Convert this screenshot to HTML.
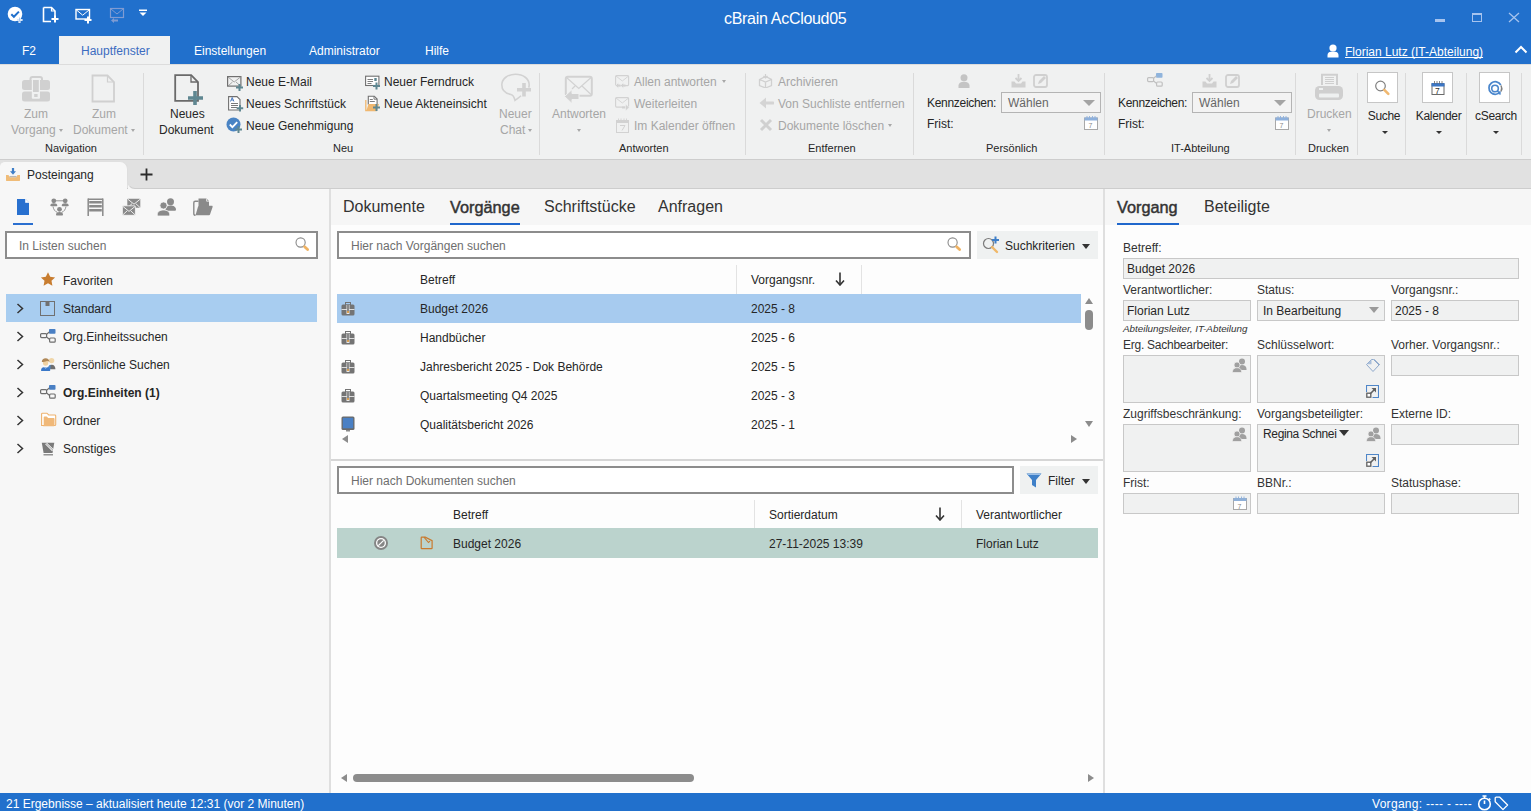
<!DOCTYPE html>
<html><head><meta charset="utf-8">
<style>
*{box-sizing:border-box;margin:0;padding:0}
html,body{width:1531px;height:811px;overflow:hidden;background:#f7f7f7;font-family:"Liberation Sans",sans-serif;font-size:12px;color:#262626}
.a{position:absolute;white-space:nowrap}
.t{line-height:14px}
#title{left:0;top:0;width:1531px;height:64px;background:#2170cc}
.w{color:#fff}
.g{color:#a6a6a6}
.sep{position:absolute;width:1px;background:#dadada}
.tri{position:absolute;width:0;height:0;border-left:2.5px solid transparent;border-right:2.5px solid transparent;border-top:3px solid #8a8a8a}
.search{position:absolute;border:2px solid #8c8c8c;background:#fff}
.ph{color:#6e6e6e}
.field{position:absolute;background:#f0f1f1;border:1px solid #c9c9c9}
</style></head><body>

<div id="title" class="a">
 <div class="a t w" style="left:724px;top:10px;font-size:16px;line-height:18px;letter-spacing:-0.3px">cBrain AcCloud05</div>
 <!-- quick access icons -->
 <svg class="a" style="left:7px;top:6px" width="18" height="18" viewBox="0 0 18 18"><circle cx="8" cy="8" r="7.3" fill="#fff"/><path d="M4.3 8.2l2.6 2.6 5-5.2" stroke="#2170cc" stroke-width="2" fill="none"/><path d="M12.5 11v6M9.5 14h6" stroke="#fff" stroke-width="2"/><path d="M12.5 11.5v5M10 14h5" stroke="#9ec0ee" stroke-width="0.8"/></svg>
 <svg class="a" style="left:42px;top:6px" width="18" height="18" viewBox="0 0 18 18"><path d="M1.5 1.5h8l3.5 3.5v6M9 15.5H1.5v-14" stroke="#fff" stroke-width="1.6" fill="none"/><path d="M9.5 1.5v3.5h3.5" stroke="#fff" stroke-width="1.2" fill="none"/><path d="M13 9.5v7M9.5 13h7" stroke="#fff" stroke-width="2"/></svg>
 <svg class="a" style="left:75px;top:8px" width="18" height="16" viewBox="0 0 18 16"><rect x="1" y="1.5" width="13.5" height="9.5" stroke="#fff" stroke-width="1.4" fill="none"/><path d="M1.5 2l6.2 5.2 6.3-5.2" stroke="#fff" stroke-width="1" fill="none"/><path d="M13 8.5v7M9.5 12h7" stroke="#fff" stroke-width="2"/></svg>
 <svg class="a" style="left:109px;top:7px" width="17" height="16" viewBox="0 0 17 16"><rect x="1.5" y="1.5" width="13" height="9" stroke="#7f9bd2" stroke-width="1.2" fill="none"/><path d="M2 2l6 5 6-5" stroke="#7f9bd2" stroke-width="1" fill="none"/><path d="M2 13.5l3-2.5v1.5h4v2h-4v1.5z" fill="#7f9bd2"/></svg>
 <svg class="a" style="left:138px;top:9px" width="10" height="8" viewBox="0 0 10 8"><rect x="1" y="0.5" width="8" height="1.5" fill="#fff"/><path d="M1.5 3.5h7l-3.5 3.5z" fill="#fff"/></svg>
 <!-- window controls -->
 <div class="a" style="left:1435px;top:19px;width:10px;height:3px;background:#a6c3ee"></div>
 <div class="a" style="left:1472px;top:13px;width:10px;height:9px;border:1px solid #a6c3ee;border-top-width:2px"></div>
 <svg class="a" style="left:1508px;top:12px" width="12" height="11" viewBox="0 0 12 11"><path d="M1 1l10 9M11 1L1 10" stroke="#a6c3ee" stroke-width="1.3"/></svg>
 <!-- tabs -->
 <div class="a" style="left:59px;top:36px;width:111px;height:28px;background:#f0f1f1"></div>
 <div class="a t w" style="left:22px;top:44px">F2</div>
 <div class="a t" style="left:81px;top:44px;color:#3c6cc0">Hauptfenster</div>
 <div class="a t w" style="left:194px;top:44px">Einstellungen</div>
 <div class="a t w" style="left:309px;top:44px">Administrator</div>
 <div class="a t w" style="left:425px;top:44px">Hilfe</div>
 <svg class="a" style="left:1327px;top:44px" width="12" height="14" viewBox="0 0 12 14"><circle cx="6" cy="4" r="3.6" fill="#fff"/><path d="M0.5 13.5v-2.5c0-2.5 2-3.5 5.5-3.5s5.5 1 5.5 3.5v2.5z" fill="#fff"/></svg>
 <div class="a t w" style="left:1345px;top:45px;text-decoration:underline;text-decoration-skip-ink:none">Florian Lutz (IT-Abteilung)</div>
 <svg class="a" style="left:1514px;top:45px" width="14" height="9" viewBox="0 0 14 9"><path d="M1.5 7.5l5.5-5.5 5.5 5.5" stroke="#fff" stroke-width="2" fill="none"/></svg>
</div>
<div class="a" style="left:0;top:64px;width:1531px;height:96px;background:#f0f1f1;border-top:1px solid #dcdcdc;border-bottom:1px solid #cdcdcd">
</div>
<svg class="a" style="left:22px;top:76px" width="29" height="27" viewBox="0 0 29 27"><path d="M8.5 4V3c0-1.2 0.8-2 2-2h7.5c1.2 0 2 0.8 2 2v1" fill="none" stroke="#d0d0d0" stroke-width="2"/><rect x="0" y="4" width="28" height="10" rx="2.5" fill="#d0d0d0"/><rect x="0" y="15.5" width="28" height="10" rx="2.5" fill="#d0d0d0"/><rect x="9.8" y="3" width="8.2" height="19.8" rx="1" fill="#f0f1f1"/><rect x="11" y="4" width="5.8" height="12" fill="#d0d0d0"/><rect x="12.2" y="18" width="3.4" height="3" fill="#d0d0d0"/></svg>
<div class="a t g" style="left:24px;top:107px;">Zum</div>
<div class="a t g" style="left:11px;top:123px;">Vorgang</div>
<div class="tri" style="left:59px;top:129px;border-top-color:#a8a8a8"></div>
<svg class="a" style="left:91px;top:74px" width="25" height="29" viewBox="0 0 25 29"><path d="M1.5 1.5h15l6.5 6.5v19.5h-21.5z" fill="none" stroke="#d0d0d0" stroke-width="1.8"/><path d="M16.5 1.5v6.5h6.5" fill="none" stroke="#d0d0d0" stroke-width="1.2"/></svg>
<div class="a t g" style="left:92px;top:107px;">Zum</div>
<div class="a t g" style="left:73px;top:123px;">Dokument</div>
<div class="tri" style="left:131px;top:129px;border-top-color:#a8a8a8"></div>
<div class="a t " style="left:45px;top:141px;font-size:11px">Navigation</div>
<div class="sep" style="left:143px;top:73px;height:82px"></div>
<svg class="a" style="left:174px;top:74px" width="30" height="32" viewBox="0 0 30 32"><path d="M1.2 1.2h16l6.8 6.8v18.8h-22.8z" fill="none" stroke="#6a6a6a" stroke-width="1.8"/><path d="M17 1.2v6.8h7" fill="none" stroke="#6a6a6a" stroke-width="1.3"/><path d="M21 17v14M14 24h15" stroke="#5f8791" stroke-width="3.6"/></svg>
<div class="a t " style="left:170px;top:107px;">Neues</div>
<div class="a t " style="left:159px;top:123px;">Dokument</div>
<svg class="a" style="left:227px;top:76px" width="17" height="15" viewBox="0 0 17 15"><rect x="0.6" y="0.6" width="13.3" height="9.5" fill="none" stroke="#707070" stroke-width="1.2"/><path d="M1 1l6.2 5 6.3-5M1 10l4.5-4M13.5 10l-4.5-4" fill="none" stroke="#909090" stroke-width="0.8"/><path d="M12.5 8v7M9 11.5h7" stroke="#5f8791" stroke-width="2"/></svg>
<svg class="a" style="left:228px;top:96px" width="16" height="16" viewBox="0 0 16 16"><path d="M0.6 0.6h8.4l3 3v10.4h-11.4z" fill="#fff" stroke="#707070" stroke-width="1.1"/><path d="M2.5 5.5l1.7-4 1.7 4M3.2 4h2" stroke="#4a7ac0" stroke-width="1" fill="none"/><path d="M3 7.5h7M3 9.5h7M3 11.5h6" stroke="#6a6a6a" stroke-width="0.9"/><path d="M12 9v6.5M8.7 12.3h6.5" stroke="#5f8791" stroke-width="2"/></svg>
<svg class="a" style="left:226px;top:117px" width="17" height="16" viewBox="0 0 17 16"><circle cx="7.5" cy="7.5" r="7" fill="#4a84c4"/><path d="M3.8 7.5l2.6 2.6 4.8-5" stroke="#fff" stroke-width="1.8" fill="none"/><path d="M12.5 9v7M9 12.5h7" stroke="#5f8791" stroke-width="2"/></svg>
<div class="a t " style="left:246px;top:75px;">Neue E-Mail</div>
<div class="a t " style="left:246px;top:97px;">Neues Schriftstück</div>
<div class="a t " style="left:246px;top:119px;">Neue Genehmigung</div>
<svg class="a" style="left:365px;top:75px" width="16" height="15" viewBox="0 0 16 15"><rect x="0.6" y="1.2" width="13.3" height="9.3" fill="#fff" stroke="#707070" stroke-width="1.1"/><path d="M2.5 4.5h5.5M2.5 6.5h5.5M2.5 8.5h4" stroke="#707070" stroke-width="0.9"/><rect x="9.3" y="3" width="2.4" height="3" fill="#5f8791"/><path d="M11.5 7.5v7M8 11h7" stroke="#5f8791" stroke-width="2"/></svg>
<svg class="a" style="left:365px;top:95px" width="16" height="17" viewBox="0 0 16 17"><path d="M0.8 5v10.5h11" fill="none" stroke="#f0b870" stroke-width="1.3"/><path d="M3.3 9.5V1.2h6l2.8 2.8v5.5" fill="#fff" stroke="#707070" stroke-width="1.1"/><path d="M9 1.2v3h3" fill="none" stroke="#707070" stroke-width="0.9"/><path d="M4.8 4.5h3M4.8 6.5h5" stroke="#707070" stroke-width="0.9"/><path d="M1.5 15.5l2-6.5h10.5l-2 6.5z" fill="#f0b870"/><path d="M11.5 9v7M8 12.5h7" stroke="#5f8791" stroke-width="2"/></svg>
<div class="a t " style="left:384px;top:75px;">Neuer Ferndruck</div>
<div class="a t " style="left:384px;top:97px;">Neue Akteneinsicht</div>
<svg class="a" style="left:500px;top:72px" width="33" height="30" viewBox="0 0 33 30"><path d="M11 22.5C5.5 21.5 1.8 18 1.8 12.8 1.8 6.8 7.8 2.2 15.5 2.2s13.7 4.6 13.7 10.6c0 1-0.2 2-0.5 2.8" fill="none" stroke="#d2d2d2" stroke-width="1.6"/><path d="M11 22.5c2 0.5 3.2 2.5 4 5.8 2-1.5 4.5-3 6-4.5" fill="none" stroke="#d2d2d2" stroke-width="1.6"/><path d="M24 11v13.5M17 17.8h14" stroke="#d2d2d2" stroke-width="3.6"/></svg>
<div class="a t g" style="left:499px;top:107px;">Neuer</div>
<div class="a t g" style="left:500px;top:123px;">Chat</div>
<div class="tri" style="left:528px;top:129px;border-top-color:#a8a8a8"></div>
<div class="a t " style="left:333px;top:141px;font-size:11px">Neu</div>
<div class="sep" style="left:539px;top:73px;height:82px"></div>
<svg class="a" style="left:564px;top:75px" width="30" height="28" viewBox="0 0 30 28"><rect x="1.8" y="1.8" width="26" height="19" rx="2" fill="none" stroke="#d2d2d2" stroke-width="2"/><path d="M2.5 2.5l12.3 11 12.3-11M18 11l9 8.5M11 11l-3 3" fill="none" stroke="#d2d2d2" stroke-width="1.2"/><path d="M0.5 21.5l7.5-7v4h7v6h-7v4z" fill="#d2d2d2" stroke="#f0f1f1" stroke-width="1"/></svg>
<div class="a t g" style="left:552px;top:107px;">Antworten</div>
<div class="tri" style="left:577px;top:129px;border-top-color:#a8a8a8"></div>
<svg class="a" style="left:615px;top:75px" width="15" height="14" viewBox="0 0 15 14"><rect x="0.6" y="0.6" width="13" height="10" rx="1" fill="none" stroke="#d2d2d2" stroke-width="1.1"/><path d="M1 1l6.3 5 6.3-5" fill="none" stroke="#d2d2d2" stroke-width="0.9"/><path d="M0.5 10.5l3-3v6zM5.5 10.5l3-3v6z" fill="#d2d2d2" stroke="#f0f1f1" stroke-width="0.6"/><path d="M3 10.5h2.5M8 10.5h2.5" stroke="#d2d2d2" stroke-width="1.8"/></svg>
<svg class="a" style="left:615px;top:97px" width="15" height="14" viewBox="0 0 15 14"><rect x="0.6" y="0.6" width="13" height="9.5" rx="1" fill="none" stroke="#d2d2d2" stroke-width="1.1"/><path d="M1 1l6.3 5 6.3-5" fill="none" stroke="#d2d2d2" stroke-width="0.9"/><path d="M7 10.5h4" stroke="#d2d2d2" stroke-width="2"/><path d="M10.5 7l3.8 3.5-3.8 3.5z" fill="#d2d2d2" stroke="#f0f1f1" stroke-width="0.6"/></svg>
<svg class="a" style="left:616px;top:118px" width="13" height="15" viewBox="0 0 13 15"><rect x="0.5" y="2.5" width="12" height="12" fill="none" stroke="#d2d2d2" stroke-width="1"/><rect x="0.5" y="2" width="12" height="3" fill="#d2d2d2"/><path d="M2.5 0.5v3M5 0.5v3M8 0.5v3M10.5 0.5v3" stroke="#d2d2d2" stroke-width="0.9"/><path d="M4 7.5h5l-3 5" fill="none" stroke="#d2d2d2" stroke-width="1"/></svg>
<div class="a t g" style="left:634px;top:75px;">Allen antworten</div>
<div class="tri" style="left:722px;top:80px;border-top-color:#a8a8a8"></div>
<div class="a t g" style="left:634px;top:97px;">Weiterleiten</div>
<div class="a t g" style="left:634px;top:119px;">Im Kalender öffnen</div>
<div class="a t " style="left:619px;top:141px;font-size:11px">Antworten</div>
<div class="sep" style="left:745px;top:73px;height:82px"></div>
<svg class="a" style="left:758px;top:74px" width="15" height="14" viewBox="0 0 15 14"><path d="M1.5 5.5l6-3 6 3v6l-6 2.5-6-2.5z M1.5 5.5l6 2.5 6-2.5M7.5 8v6" fill="none" stroke="#d0d0d0" stroke-width="1.3"/><path d="M7.5 0v4M5.5 2l2 2 2-2" stroke="#d0d0d0" stroke-width="1.2" fill="none"/></svg>
<svg class="a" style="left:759px;top:97px" width="15" height="12" viewBox="0 0 15 12"><path d="M0.5 6l6.5-5.5v11z" fill="#d4d4d4"/><path d="M6 6h8" stroke="#d4d4d4" stroke-width="3" stroke-linecap="round"/></svg>
<svg class="a" style="left:759px;top:118px" width="14" height="14" viewBox="0 0 14 14"><path d="M2 2l10 10M12 2l-10 10" stroke="#d0d0d0" stroke-width="3"/></svg>
<div class="a t g" style="left:778px;top:75px;">Archivieren</div>
<div class="a t g" style="left:778px;top:97px;">Von Suchliste entfernen</div>
<div class="a t g" style="left:778px;top:119px;">Dokumente löschen</div>
<div class="tri" style="left:888px;top:124px;border-top-color:#a8a8a8"></div>
<div class="a t " style="left:808px;top:141px;font-size:11px">Entfernen</div>
<div class="sep" style="left:913px;top:73px;height:82px"></div>
<svg class="a" style="left:958px;top:74px" width="12" height="14" viewBox="0 0 12 14"><circle cx="6" cy="3.8" r="3.5" fill="#c4c4c4"/><path d="M0.5 14v-2.5c0-2.5 2-3.8 5.5-3.8s5.5 1.3 5.5 3.8v2.5z" fill="#c4c4c4"/></svg>
<svg class="a" style="left:1011px;top:74px" width="15" height="14" viewBox="0 0 15 14"><path d="M7.5 0v6.5M4.5 4l3 3 3-3" stroke="#d0d0d0" stroke-width="1.8" fill="none"/><path d="M0.5 7.5h3l1.5 2h5l1.5-2h3v6h-14z" fill="#d0d0d0"/></svg>
<svg class="a" style="left:1033px;top:74px" width="15" height="14" viewBox="0 0 15 14"><rect x="1" y="1" width="13" height="12" rx="2" fill="none" stroke="#d0d0d0" stroke-width="1.8"/><path d="M5 10l1-3 5-5 2 2-5 5z" fill="#d0d0d0"/></svg>
<div class="a t " style="left:927px;top:96px;letter-spacing:-0.3px">Kennzeichen:</div>
<div class="a" style="left:1001px;top:92px;width:100px;height:21px;border:1px solid #b4b4b4;background:#f3f3f3"></div>
<div class="a t " style="left:1008px;top:96px;color:#666">Wählen</div>
<div class="tri" style="left:1083px;top:100px;border-left-width:6px;border-right-width:6px;border-top:6px solid #a4a4a4"></div>
<div class="a t " style="left:927px;top:117px;">Frist:</div>
<svg class="a" style="left:1084px;top:115px" width="14" height="15" viewBox="0 0 14 15"><rect x="0.5" y="3" width="13" height="11.5" fill="#fff" stroke="#a8a8a8" stroke-width="1"/><rect x="0.5" y="2.5" width="13" height="3" fill="#8db0dc"/><path d="M3 1v3M5.5 1v3M8.5 1v3M11 1v3" stroke="#8db0dc" stroke-width="0.9"/><text x="4.5" y="13" font-size="7" fill="#8a8a8a" font-family="Liberation Sans">7</text></svg>
<div class="a t " style="left:986px;top:141px;font-size:11px">Persönlich</div>
<div class="sep" style="left:1104px;top:73px;height:82px"></div>
<svg class="a" style="left:1147px;top:73px" width="16" height="14" viewBox="0 0 16 14"><rect x="0.6" y="4.6" width="6" height="4" rx="1" fill="none" stroke="#c0c0c0" stroke-width="1.2"/><rect x="9" y="0" width="6.5" height="4.8" rx="0.8" fill="#90b4dc"/><rect x="9.6" y="9" width="5.6" height="4.2" rx="1" fill="none" stroke="#c0c0c0" stroke-width="1.2"/><path d="M6.6 5.2L9.3 3M6.6 8l3 2.5" stroke="#c0c0c0" stroke-width="1.1"/></svg>
<svg class="a" style="left:1202px;top:74px" width="15" height="14" viewBox="0 0 15 14"><path d="M7.5 0v6.5M4.5 4l3 3 3-3" stroke="#d0d0d0" stroke-width="1.8" fill="none"/><path d="M0.5 7.5h3l1.5 2h5l1.5-2h3v6h-14z" fill="#d0d0d0"/></svg>
<svg class="a" style="left:1225px;top:74px" width="15" height="14" viewBox="0 0 15 14"><rect x="1" y="1" width="13" height="12" rx="2" fill="none" stroke="#d0d0d0" stroke-width="1.8"/><path d="M5 10l1-3 5-5 2 2-5 5z" fill="#d0d0d0"/></svg>
<div class="a t " style="left:1118px;top:96px;letter-spacing:-0.3px">Kennzeichen:</div>
<div class="a" style="left:1192px;top:92px;width:100px;height:21px;border:1px solid #b4b4b4;background:#f3f3f3"></div>
<div class="a t " style="left:1199px;top:96px;color:#666">Wählen</div>
<div class="tri" style="left:1274px;top:100px;border-left-width:6px;border-right-width:6px;border-top:6px solid #a4a4a4"></div>
<div class="a t " style="left:1118px;top:117px;">Frist:</div>
<svg class="a" style="left:1275px;top:115px" width="14" height="15" viewBox="0 0 14 15"><rect x="0.5" y="3" width="13" height="11.5" fill="#fff" stroke="#a8a8a8" stroke-width="1"/><rect x="0.5" y="2.5" width="13" height="3" fill="#8db0dc"/><path d="M3 1v3M5.5 1v3M8.5 1v3M11 1v3" stroke="#8db0dc" stroke-width="0.9"/><text x="4.5" y="13" font-size="7" fill="#8a8a8a" font-family="Liberation Sans">7</text></svg>
<div class="a t " style="left:1171px;top:141px;font-size:11px">IT-Abteilung</div>
<div class="sep" style="left:1295px;top:73px;height:82px"></div>
<svg class="a" style="left:1314px;top:73px" width="30" height="28" viewBox="0 0 30 28"><path d="M8 12V1.8h15V12" fill="none" stroke="#cfcfcf" stroke-width="2"/><path d="M11 4.5h9M11 6.5h9M11 8.5h9M11 10.5h9" stroke="#cfcfcf" stroke-width="1"/><rect x="1" y="13" width="28" height="14" rx="4.5" fill="#cfcfcf"/><rect x="5" y="15" width="4" height="2" fill="#eef0f0"/><rect x="5" y="20.5" width="20" height="4" rx="1" fill="#eef0f0"/></svg>
<div class="a t g" style="left:1307px;top:107px;">Drucken</div>
<div class="tri" style="left:1327px;top:129px;border-top-color:#a8a8a8"></div>
<div class="a t " style="left:1308px;top:141px;font-size:11px">Drucken</div>
<div class="sep" style="left:1357px;top:73px;height:82px"></div>
<div class="a" style="left:1367px;top:72px;width:31px;height:31px;background:#fff;border:1px solid #c6c6c6"></div>
<div class="a t " style="left:1367.7px;top:109px;letter-spacing:-0.3px">Suche</div>
<div class="a" style="left:1422px;top:72px;width:31px;height:31px;background:#fff;border:1px solid #c6c6c6"></div>
<div class="a t " style="left:1415.7px;top:109px;letter-spacing:-0.3px">Kalender</div>
<div class="a" style="left:1479px;top:72px;width:31px;height:31px;background:#fff;border:1px solid #c6c6c6"></div>
<div class="a t " style="left:1475px;top:109px;letter-spacing:-0.3px">cSearch</div>
<svg class="a" style="left:1373px;top:78px" width="19" height="19" viewBox="0 0 19 19"><circle cx="7.5" cy="8" r="4.8" fill="none" stroke="#808080" stroke-width="1.2"/><path d="M11.3 11.8l4 4" stroke="#f0b870" stroke-width="2.6" stroke-linecap="round"/></svg>
<svg class="a" style="left:1431px;top:80px" width="14" height="16" viewBox="0 0 14 16"><rect x="1" y="4" width="12" height="10.5" fill="#fff" stroke="#6a6a6a" stroke-width="1"/><rect x="0.5" y="3" width="13" height="3.5" fill="#3c76c4"/><path d="M3.5 1v3M6 1v3M8.5 1v3M11 1v3" stroke="#6a6a6a" stroke-width="0.8"/><text x="4" y="13.5" font-size="8.5" fill="#333" font-family="Liberation Sans">7</text></svg>
<svg class="a" style="left:1487px;top:80px" width="17" height="17" viewBox="0 0 17 17"><path d="M13.5 11.5A6.3 6.3 0 1 1 13.8 5" fill="none" stroke="#4a86cc" stroke-width="1.7"/><circle cx="8" cy="8.5" r="3.3" fill="none" stroke="#4a86cc" stroke-width="1.6"/><path d="M14 5.5a6.3 6.3 0 0 1 0 6" fill="none" stroke="#808080" stroke-width="1.5"/><path d="M10.5 11l3 3.5" stroke="#4a86cc" stroke-width="1.6"/></svg>
<div class="tri" style="left:1382px;top:131px;border-left-width:3px;border-right-width:3px;border-top:3.5px solid #333"></div><div class="tri" style="left:1436px;top:131px;border-left-width:3px;border-right-width:3px;border-top:3.5px solid #333"></div><div class="tri" style="left:1493px;top:131px;border-left-width:3px;border-right-width:3px;border-top:3.5px solid #333"></div>
<div class="sep" style="left:1405px;top:73px;height:82px"></div>
<div class="sep" style="left:1466px;top:73px;height:82px"></div>
<div class="sep" style="left:1521px;top:73px;height:82px"></div><div class="a" style="left:0;top:160px;width:1531px;height:29px;background:#e1e1e1;border-bottom:1px solid #cdcdcd"></div>
<div class="a" style="left:0;top:161px;width:128px;height:17px;background:#f7f7f7;border-radius:5px 8px 0 0;border-right:1px solid #dedede;border-top:1px solid #e0e0e0"></div><div class="a" style="left:0;top:177px;width:127px;height:13px;background:#f7f7f7"></div>
<div class="a" style="left:128px;top:178px;width:10px;height:12px;background:#f7f7f7"></div><div class="a" style="left:127px;top:171px;width:14px;height:18px;background:#e1e1e1;border-left:1px solid #dedede;border-bottom:1px solid #cdcdcd;border-bottom-left-radius:8px"></div>
<svg class="a" style="left:5px;top:167px" width="16" height="16" viewBox="0 0 16 16"><path d="M1 8h2.5l1.3 2.2h6.4l1.3-2.2h2.5v5.5c0 0.3-0.2 0.5-0.5 0.5h-13c-0.3 0-0.5-0.2-0.5-0.5z" fill="#f0bc78"/><path d="M4.5 9.6h7" stroke="#b8b8b8" stroke-width="1.3"/><path d="M8 1v4.5" stroke="#3f7fc8" stroke-width="2.2"/><path d="M5 4.3l3 3.5 3-3.5z" fill="#3f7fc8"/></svg>
<div class="a t " style="left:27px;top:168px;">Posteingang</div>
<svg class="a" style="left:140px;top:168px" width="13" height="13" viewBox="0 0 13 13"><path d="M6.5 0.5v12M0.5 6.5h12" stroke="#2b2b2b" stroke-width="1.8"/></svg>
<div class="a" style="left:0;top:189px;width:329px;height:604px;background:#f7f7f7"></div>
<div class="a" style="left:329px;top:189px;width:2px;height:604px;background:#dfdfdf"></div>
<svg class="a" style="left:16px;top:198px" width="14" height="18" viewBox="0 0 14 18"><path d="M1 1h8.5l3.5 3.5v12.5h-12z" fill="#2870cf"/><path d="M9.5 1v3.5h3.5" fill="#fff" stroke="#fff" stroke-width="0.6"/></svg>
<div class="a" style="left:13px;top:223px;width:20px;height:2px;background:#2a6fd0"></div>
<svg class="a" style="left:50px;top:198px" width="19" height="18" viewBox="0 0 19 18"><path d="M5 2.8h9M3 8.5c0.5 3 2 5 4.5 6M16 8.5c-0.5 3-2 5-4.5 6" stroke="#8a8a8a" stroke-width="0.9" fill="none"/><circle cx="3.8" cy="2.8" r="2.4" fill="#8a8a8a"/><circle cx="15.2" cy="2.8" r="2.4" fill="#8a8a8a"/><path d="M0.3 7.5c0-1.5 1.5-2.3 3.5-2.3s3.5 0.8 3.5 2.3c0 0.6-0.5 0.8-1 0.8h-5c-0.6 0-1-0.3-1-0.8zM11.7 7.5c0-1.5 1.5-2.3 3.5-2.3s3.5 0.8 3.5 2.3c0 0.6-0.5 0.8-1 0.8h-5c-0.6 0-1-0.3-1-0.8z" fill="#8a8a8a"/><circle cx="9.5" cy="11.3" r="2.4" fill="#8a8a8a"/><path d="M6 16.5c0-1.5 1.5-2.5 3.5-2.5s3.5 1 3.5 2.5c0 0.6-0.5 1-1 1h-5c-0.6 0-1-0.4-1-1z" fill="#8a8a8a"/></svg>
<svg class="a" style="left:87px;top:198px" width="17" height="18" viewBox="0 0 17 18"><path d="M1.2 0.5v17.5M15.8 0.5v17.5" stroke="#8a8a8a" stroke-width="1.5"/><rect x="1" y="0.5" width="15" height="1.5" fill="#8a8a8a"/><rect x="2.2" y="3" width="12.6" height="2.5" fill="#8a8a8a"/><rect x="2.2" y="7" width="12.6" height="2.5" fill="#8a8a8a"/><rect x="2.2" y="11" width="12.6" height="2.5" fill="#8a8a8a"/></svg>
<svg class="a" style="left:122px;top:198px" width="19" height="18" viewBox="0 0 19 18"><rect x="5.3" y="0.8" width="13" height="9" rx="0.8" fill="#8a8a8a"/><path d="M5.8 1.2l6.2 5 6.2-5M5.8 9.5l4.2-3.8M18 9.5l-4.2-3.8" stroke="#f7f7f7" stroke-width="0.9" fill="none"/><rect x="0.4" y="7.8" width="13" height="9.5" rx="0.8" fill="#8a8a8a" stroke="#f7f7f7" stroke-width="0.8"/><path d="M0.9 8.4l6.1 5 6.1-5M0.9 16.8l4.3-4M13 16.8l-4.3-4" stroke="#f7f7f7" stroke-width="0.9" fill="none"/></svg>
<svg class="a" style="left:157px;top:198px" width="20" height="19" viewBox="0 0 20 19"><circle cx="13.5" cy="3.8" r="3.5" fill="#8a8a8a"/><path d="M8.5 11.5c0-2.5 2-4 5-4s5.5 1.5 5.5 4c0 0.8-0.5 1.3-1.3 1.3h-7.9c-0.8 0-1.3-0.5-1.3-1.3z" fill="#8a8a8a"/><circle cx="6.5" cy="7.5" r="3.6" fill="#8a8a8a" stroke="#f7f7f7" stroke-width="0.8"/><path d="M0.3 16.5c0-2.8 2.5-4.5 6.2-4.5s6.2 1.7 6.2 4.5c0 1-0.6 1.5-1.5 1.5h-9.4c-0.9 0-1.5-0.5-1.5-1.5z" fill="#8a8a8a" stroke="#f7f7f7" stroke-width="0.8"/></svg>
<svg class="a" style="left:193px;top:198px" width="20" height="18" viewBox="0 0 20 18"><path d="M2.5 17.3c-1 0-1.7-0.6-1.7-1.5v-11c0-0.9 0.6-1.5 1.5-1.5h3.2" fill="none" stroke="#8a8a8a" stroke-width="1.4"/><path d="M5.5 8V0.6h8l2.5 2.5v5" fill="#8a8a8a"/><path d="M13.6 0.6v2.6h2.5" fill="none" stroke="#f7f7f7" stroke-width="0.8"/><path d="M2.5 17.3l2.5-8.5c0.2-0.6 0.7-1 1.3-1h12.5c0.6 0 1 0.5 0.8 1.1l-2.5 7.4c-0.2 0.6-0.8 1-1.4 1z" fill="#8a8a8a"/></svg>
<div class="a" style="left:5px;top:231px;width:313px;height:28px;border:2px solid #8c8c8c;background:#fff"></div>
<div class="a t " style="left:19px;top:239px;color:#6e6e6e">In Listen suchen</div>
<svg class="a" style="left:294px;top:237px" width="16" height="16" viewBox="0 0 16 16"><circle cx="6.6" cy="5.5" r="4.6" fill="none" stroke="#8a8a8a" stroke-width="1.1"/><path d="M10.6 9.8l3 2.8" stroke="#efb262" stroke-width="2.8" stroke-linecap="round"/></svg>
<div class="a" style="left:6px;top:294px;width:311px;height:28px;background:#a8cdf0"></div>
<svg class="a" style="left:40px;top:272px" width="16" height="14" viewBox="0 0 16 14"><path d="M8 0.3l2.2 4.5 4.9 0.6-3.6 3.4 0.9 4.9-4.4-2.4-4.4 2.4 0.9-4.9-3.6-3.4 4.9-0.6z" fill="#c87d30"/></svg>
<div class="a t " style="left:63px;top:274px;">Favoriten</div>
<svg class="a" style="left:16px;top:303px" width="8" height="11" viewBox="0 0 8 11"><path d="M1.5 1l5 4.5-5 4.5" stroke="#333" stroke-width="1.5" fill="none"/></svg>
<div class="a t " style="left:63px;top:302px;">Standard</div>
<svg class="a" style="left:16px;top:331px" width="8" height="11" viewBox="0 0 8 11"><path d="M1.5 1l5 4.5-5 4.5" stroke="#333" stroke-width="1.5" fill="none"/></svg>
<div class="a t " style="left:63px;top:330px;">Org.Einheitssuchen</div>
<svg class="a" style="left:16px;top:359px" width="8" height="11" viewBox="0 0 8 11"><path d="M1.5 1l5 4.5-5 4.5" stroke="#333" stroke-width="1.5" fill="none"/></svg>
<div class="a t " style="left:63px;top:358px;">Persönliche Suchen</div>
<svg class="a" style="left:16px;top:387px" width="8" height="11" viewBox="0 0 8 11"><path d="M1.5 1l5 4.5-5 4.5" stroke="#333" stroke-width="1.5" fill="none"/></svg>
<div class="a t " style="left:63px;top:386px;font-weight:bold">Org.Einheiten (1)</div>
<svg class="a" style="left:16px;top:415px" width="8" height="11" viewBox="0 0 8 11"><path d="M1.5 1l5 4.5-5 4.5" stroke="#333" stroke-width="1.5" fill="none"/></svg>
<div class="a t " style="left:63px;top:414px;">Ordner</div>
<svg class="a" style="left:16px;top:443px" width="8" height="11" viewBox="0 0 8 11"><path d="M1.5 1l5 4.5-5 4.5" stroke="#333" stroke-width="1.5" fill="none"/></svg>
<div class="a t " style="left:63px;top:442px;">Sonstiges</div>
<svg class="a" style="left:40px;top:301px" width="15" height="15" viewBox="0 0 15 15"><rect x="0.5" y="0.5" width="14" height="14" fill="none" stroke="#707070" stroke-width="1"/><rect x="5.5" y="0.5" width="4" height="4.5" fill="#707070"/></svg>
<svg class="a" style="left:40px;top:329px" width="16" height="14" viewBox="0 0 16 14"><rect x="0.6" y="4.6" width="6" height="4" rx="1" fill="none" stroke="#6e6e6e" stroke-width="1.2"/><rect x="9" y="0" width="6.5" height="4.8" rx="0.8" fill="#4a80c4"/><rect x="9.6" y="9" width="5.6" height="4.2" rx="1" fill="none" stroke="#6e6e6e" stroke-width="1.2"/><path d="M6.6 5.2L9.3 3M6.6 8l3 2.5" stroke="#6e6e6e" stroke-width="1.1"/></svg>
<svg class="a" style="left:40px;top:385px" width="16" height="14" viewBox="0 0 16 14"><rect x="0.6" y="4.6" width="6" height="4" rx="1" fill="none" stroke="#6e6e6e" stroke-width="1.2"/><rect x="9" y="0" width="6.5" height="4.8" rx="0.8" fill="#4a80c4"/><rect x="9.6" y="9" width="5.6" height="4.2" rx="1" fill="none" stroke="#6e6e6e" stroke-width="1.2"/><path d="M6.6 5.2L9.3 3M6.6 8l3 2.5" stroke="#6e6e6e" stroke-width="1.1"/></svg>
<svg class="a" style="left:40px;top:356px" width="17" height="16" viewBox="0 0 17 16"><circle cx="11.6" cy="4.6" r="2.7" fill="#f0d6a8"/><path d="M8 13.2c0-2.5 1.5-4.5 3.8-4.5s3.6 2 3.6 4.5z" fill="#6e6e6e"/><path d="M8 13.2c0-2.5 1-4.3 2.5-4.5v4.5z" fill="#4a8ad0"/><ellipse cx="5.6" cy="6.8" rx="2.7" ry="3" fill="#f0d2a2"/><path d="M1.8 6c0-2.5 1.6-3.8 3.8-3.8s3.8 1.3 3.8 3.8c-1-1-2-1.2-3-0.8-1 0.4-2.5 0.6-4.6 0.8z" fill="#b08858"/><path d="M1 14.5c0-2.5 1.5-3.6 4.6-3.6s4.6 1.1 4.6 3.6c0 0.3-0.2 0.5-0.5 0.5h-8.2c-0.3 0-0.5-0.2-0.5-0.5z" fill="#3a78c8"/><path d="M4.6 11l1 1.3 1-1.3" fill="none" stroke="#fff" stroke-width="0.7"/></svg>
<svg class="a" style="left:40px;top:412px" width="17" height="16" viewBox="0 0 17 16"><path d="M1.6 13.5v-11.5c0-0.5 0.3-0.8 0.8-0.8h4.5l1.8 1.8h6.2c0.5 0 0.8 0.3 0.8 0.8v8.7c0 0.6-0.4 1-1 1z" fill="#fff" stroke="#eeb26e" stroke-width="1.1"/><path d="M3 14.3h10.5c0.6 0 1-0.4 1-1v-6.5c0-0.5-0.3-0.8-0.8-0.8h-5.5l-1.5-1.5h-2.2c-0.5 0-0.8 0.3-0.8 0.8v8.2c0 0.5-0.3 0.8-0.8 0.8z" fill="#f0b878"/></svg>
<svg class="a" style="left:41px;top:442px" width="15" height="15" viewBox="0 0 15 15"><path d="M0.8 0.8h12.5l-1.8 10.2h-8.9z" fill="#7a7a7a"/><path d="M5 1.5l7 6.8" stroke="#fff" stroke-width="2.4"/><path d="M5 1.5l7 6.8" stroke="#7a7a7a" stroke-width="0.8"/><path d="M2.5 12.8h9.5" stroke="#7a7a7a" stroke-width="1.2"/></svg><div class="a" style="left:331px;top:189px;width:772px;height:604px;background:#fdfdfd"></div>
<div class="a" style="left:331px;top:189px;width:772px;height:36px;background:#f6f6f6"></div>
<div class="a" style="left:1103px;top:189px;width:2px;height:604px;background:#dfdfdf"></div>
<div class="a" style="left:343px;top:198px;font-size:16px;line-height:18px;color:#333">Dokumente</div>
<div class="a" style="left:450px;top:198px;font-size:16px;line-height:18px;color:#333;font-size:16.3px;-webkit-text-stroke:0.45px #333;letter-spacing:0px">Vorgänge</div>
<div class="a" style="left:544px;top:198px;font-size:16px;line-height:18px;color:#333">Schriftstücke</div>
<div class="a" style="left:658px;top:198px;font-size:16px;line-height:18px;color:#333">Anfragen</div>
<div class="a" style="left:450px;top:223px;width:70px;height:2px;background:#2067cc"></div>
<div class="a" style="left:337px;top:231px;width:634px;height:28px;border:2px solid #8c8c8c;background:#fff"></div>
<div class="a t " style="left:351px;top:239px;color:#6e6e6e">Hier nach Vorgängen suchen</div>
<svg class="a" style="left:946px;top:237px" width="16" height="16" viewBox="0 0 16 16"><circle cx="6.6" cy="5.5" r="4.6" fill="none" stroke="#8a8a8a" stroke-width="1.1"/><path d="M10.6 9.8l3 2.8" stroke="#efb262" stroke-width="2.8" stroke-linecap="round"/></svg>
<div class="a" style="left:977px;top:231px;width:121px;height:28px;background:#eff1f1"></div>
<svg class="a" style="left:982px;top:236px" width="19" height="18" viewBox="0 0 19 18"><circle cx="6.5" cy="7.5" r="5" fill="none" stroke="#7a7a7a" stroke-width="1.2"/><path d="M10 11l5 5" stroke="#f0b868" stroke-width="2.4" stroke-linecap="round"/><path d="M13.5 0.5v7M10 4h7" stroke="#3f7fc8" stroke-width="2"/></svg>
<div class="a t " style="left:1005px;top:239px;">Suchkriterien</div>
<div class="tri" style="left:1082px;top:244px;border-left-width:4.5px;border-right-width:4.5px;border-top:5px solid #333"></div>
<div class="a t " style="left:420px;top:273px;">Betreff</div>
<div class="a t " style="left:751px;top:273px;">Vorgangsnr.</div>
<div class="a" style="left:736px;top:265px;width:1px;height:29px;background:#e3e3e3"></div>
<div class="a" style="left:861px;top:265px;width:1px;height:29px;background:#e3e3e3"></div>
<svg class="a" style="left:835px;top:272px" width="10" height="14" viewBox="0 0 10 14"><path d="M5 0.5v12" stroke="#333" stroke-width="1.6"/><path d="M1 8.5l4 4.5 4-4.5" stroke="#333" stroke-width="1.6" fill="none"/></svg>
<div class="a" style="left:337px;top:294px;width:744px;height:29px;background:#a7cbef"></div>
<svg class="a" style="left:341px;top:302px" width="14" height="14" viewBox="0 0 14 14"><rect x="0.5" y="2.5" width="13" height="11" rx="1.5" fill="#747474"/><rect x="4.5" y="0.5" width="5" height="2.5" fill="none" stroke="#747474" stroke-width="1"/><rect x="0.5" y="7" width="13" height="0.9" fill="#e8e8e8"/><rect x="5.5" y="3" width="3" height="9" fill="#e8e8e8"/><rect x="6.2" y="3" width="1.6" height="7.5" fill="#747474"/><rect x="6.2" y="9" width="1.6" height="2" fill="#e8a040"/></svg>
<div class="a t " style="left:420px;top:302px;">Budget 2026</div>
<div class="a t " style="left:751px;top:302px;">2025 - 8</div>
<svg class="a" style="left:341px;top:331px" width="14" height="14" viewBox="0 0 14 14"><rect x="0.5" y="2.5" width="13" height="11" rx="1.5" fill="#747474"/><rect x="4.5" y="0.5" width="5" height="2.5" fill="none" stroke="#747474" stroke-width="1"/><rect x="0.5" y="7" width="13" height="0.9" fill="#e8e8e8"/><rect x="5.5" y="3" width="3" height="9" fill="#e8e8e8"/><rect x="6.2" y="3" width="1.6" height="7.5" fill="#747474"/><rect x="6.2" y="9" width="1.6" height="2" fill="#e8a040"/></svg>
<div class="a t " style="left:420px;top:331px;">Handbücher</div>
<div class="a t " style="left:751px;top:331px;">2025 - 6</div>
<svg class="a" style="left:341px;top:360px" width="14" height="14" viewBox="0 0 14 14"><rect x="0.5" y="2.5" width="13" height="11" rx="1.5" fill="#747474"/><rect x="4.5" y="0.5" width="5" height="2.5" fill="none" stroke="#747474" stroke-width="1"/><rect x="0.5" y="7" width="13" height="0.9" fill="#e8e8e8"/><rect x="5.5" y="3" width="3" height="9" fill="#e8e8e8"/><rect x="6.2" y="3" width="1.6" height="7.5" fill="#747474"/><rect x="6.2" y="9" width="1.6" height="2" fill="#e8a040"/></svg>
<div class="a t " style="left:420px;top:360px;">Jahresbericht 2025 - Dok Behörde</div>
<div class="a t " style="left:751px;top:360px;">2025 - 5</div>
<svg class="a" style="left:341px;top:389px" width="14" height="14" viewBox="0 0 14 14"><rect x="0.5" y="2.5" width="13" height="11" rx="1.5" fill="#747474"/><rect x="4.5" y="0.5" width="5" height="2.5" fill="none" stroke="#747474" stroke-width="1"/><rect x="0.5" y="7" width="13" height="0.9" fill="#e8e8e8"/><rect x="5.5" y="3" width="3" height="9" fill="#e8e8e8"/><rect x="6.2" y="3" width="1.6" height="7.5" fill="#747474"/><rect x="6.2" y="9" width="1.6" height="2" fill="#e8a040"/></svg>
<div class="a t " style="left:420px;top:389px;">Quartalsmeeting Q4 2025</div>
<div class="a t " style="left:751px;top:389px;">2025 - 3</div>
<div class="a t " style="left:420px;top:418px;">Qualitätsbericht 2026</div>
<div class="a t " style="left:751px;top:418px;">2025 - 1</div>
<svg class="a" style="left:341px;top:416px" width="14" height="16" viewBox="0 0 14 16"><rect x="0.5" y="0.5" width="13" height="13.5" rx="1.5" fill="#6a6a6a"/><rect x="1.8" y="1.8" width="10.4" height="10.5" fill="#4a80c4"/><rect x="5" y="14" width="4" height="1.5" fill="#8a8a8a"/></svg>
<div class="tri" style="left:1085px;top:298px;border-top:none;border-bottom:6px solid #8c8c8c;border-left-width:4.5px;border-right-width:4.5px"></div>
<div class="a" style="left:1085px;top:310px;width:8px;height:20px;border-radius:4px;background:#8c8c8c"></div>
<div class="tri" style="left:1085px;top:421px;border-top:6px solid #8c8c8c;border-left-width:4.5px;border-right-width:4.5px"></div>
<div class="tri" style="left:342px;top:435px;border-top:4px solid transparent;border-bottom:4px solid transparent;border-right:6px solid #8c8c8c;border-left:none"></div>
<div class="tri" style="left:1071px;top:435px;border-top:4px solid transparent;border-bottom:4px solid transparent;border-left:6px solid #8c8c8c;border-right:none"></div>
<div class="a" style="left:331px;top:459px;width:772px;height:2px;background:#d6d6d6"></div>
<div class="a" style="left:337px;top:466px;width:677px;height:28px;border:2px solid #8c8c8c;background:#fff"></div>
<div class="a t " style="left:351px;top:474px;color:#6e6e6e">Hier nach Dokumenten suchen</div>
<div class="a" style="left:1020px;top:466px;width:78px;height:28px;background:#eff1f1"></div>
<svg class="a" style="left:1026px;top:473px" width="16" height="15" viewBox="0 0 16 15"><path d="M0.5 0.5h15l-5.5 6.5v7.5l-4-2.5v-5z" fill="#3f80c8"/><path d="M1.5 1.5h13" stroke="#9cc0e8" stroke-width="1"/></svg>
<div class="a t " style="left:1048px;top:474px;">Filter</div>
<div class="tri" style="left:1082px;top:479px;border-left-width:4.5px;border-right-width:4.5px;border-top:5px solid #333"></div>
<div class="a t " style="left:453px;top:508px;">Betreff</div>
<div class="a t " style="left:769px;top:508px;">Sortierdatum</div>
<div class="a t " style="left:976px;top:508px;">Verantwortlicher</div>
<div class="a" style="left:754px;top:500px;width:1px;height:28px;background:#e3e3e3"></div>
<div class="a" style="left:961px;top:500px;width:1px;height:28px;background:#e3e3e3"></div>
<svg class="a" style="left:935px;top:507px" width="10" height="14" viewBox="0 0 10 14"><path d="M5 0.5v12" stroke="#333" stroke-width="1.6"/><path d="M1 8.5l4 4.5 4-4.5" stroke="#333" stroke-width="1.6" fill="none"/></svg>
<div class="a" style="left:337px;top:528px;width:761px;height:30px;background:#bbd3cd"></div>
<svg class="a" style="left:373px;top:535px" width="16" height="16" viewBox="0 0 16 16"><circle cx="8" cy="8" r="7" fill="#858585"/><circle cx="8" cy="8" r="5" fill="#fff"/><circle cx="8" cy="8" r="3.7" fill="#858585"/><path d="M5.3 10.7l5.4-5.4" stroke="#fff" stroke-width="1.2"/></svg>
<svg class="a" style="left:420px;top:536px" width="14" height="14" viewBox="0 0 14 14"><path d="M1.2 1.8c0-0.4 0.3-0.6 0.6-0.6h3.5l6.8 3.5v7.4c0 0.4-0.3 0.6-0.6 0.6h-9.7c-0.4 0-0.6-0.3-0.6-0.6z" fill="none" stroke="#c97a2e" stroke-width="1.2"/><path d="M4 1.2l4.5 5.3 1.5-1.3" fill="none" stroke="#c97a2e" stroke-width="1.1"/></svg>
<div class="a t " style="left:453px;top:537px;">Budget 2026</div>
<div class="a t " style="left:769px;top:537px;">27-11-2025 13:39</div>
<div class="a t " style="left:976px;top:537px;">Florian Lutz</div>
<div class="tri" style="left:341px;top:774px;border-top:4.5px solid transparent;border-bottom:4.5px solid transparent;border-right:6px solid #8c8c8c;border-left:none"></div>
<div class="a" style="left:353px;top:774px;width:341px;height:8px;border-radius:4px;background:#8c8c8c"></div>
<div class="tri" style="left:1088px;top:774px;border-top:4.5px solid transparent;border-bottom:4.5px solid transparent;border-left:6px solid #8c8c8c;border-right:none"></div><div class="a" style="left:1105px;top:189px;width:426px;height:604px;background:#fdfdfd"></div>
<div class="a" style="left:1105px;top:189px;width:426px;height:36px;background:#f6f6f6"></div>
<div class="a" style="left:1117px;top:198px;font-size:16px;line-height:18px;color:#333;font-size:16.3px;-webkit-text-stroke:0.45px #333;letter-spacing:0px">Vorgang</div>
<div class="a" style="left:1204px;top:198px;font-size:16px;line-height:18px;color:#333">Beteiligte</div>
<div class="a" style="left:1117px;top:223px;width:62px;height:2px;background:#2067cc"></div>
<div class="a t " style="left:1123px;top:241px;color:#333">Betreff:</div>
<div class="a" style="left:1123px;top:258px;width:396px;height:21px;background:#f0f1f1;border:1px solid #c8c8c8"></div>
<div class="a t " style="left:1127px;top:262px;">Budget 2026</div>
<div class="a t " style="left:1123px;top:283px;color:#333">Verantwortlicher:</div>
<div class="a t " style="left:1257px;top:283px;color:#333">Status:</div>
<div class="a t " style="left:1391px;top:283px;color:#333">Vorgangsnr.:</div>
<div class="a" style="left:1123px;top:300px;width:128px;height:21px;background:#f0f1f1;border:1px solid #c8c8c8"></div>
<div class="a" style="left:1257px;top:300px;width:128px;height:21px;background:#f0f1f1;border:1px solid #c8c8c8"></div>
<div class="a" style="left:1391px;top:300px;width:128px;height:21px;background:#f0f1f1;border:1px solid #c8c8c8"></div>
<div class="a t " style="left:1127px;top:304px;">Florian Lutz</div>
<div class="a t " style="left:1263px;top:304px;">In Bearbeitung</div>
<div class="a t " style="left:1395px;top:304px;">2025 - 8</div>
<div class="tri" style="left:1369px;top:307px;border-left-width:5px;border-right-width:5px;border-top:6px solid #9a9a9a"></div>
<div class="a" style="left:1123px;top:323px;font-size:9.85px;line-height:11px;font-style:italic;color:#333">Abteilungsleiter, IT-Abteilung</div>
<div class="a t " style="left:1123px;top:338px;color:#333;letter-spacing:-0.25px">Erg. Sachbearbeiter:</div>
<div class="a t " style="left:1257px;top:338px;color:#333">Schlüsselwort:</div>
<div class="a t " style="left:1391px;top:338px;color:#333">Vorher. Vorgangsnr.:</div>
<div class="a" style="left:1123px;top:355px;width:128px;height:48px;background:#f0f1f1;border:1px solid #c8c8c8"></div>
<div class="a" style="left:1257px;top:355px;width:128px;height:48px;background:#f0f1f1;border:1px solid #c8c8c8"></div>
<div class="a" style="left:1391px;top:355px;width:128px;height:21px;background:#f0f1f1;border:1px solid #c8c8c8"></div>
<svg class="a" style="left:1232px;top:358px" width="15" height="15" viewBox="0 0 15 15"><circle cx="10" cy="3.5" r="3" fill="#a0a0a0"/><path d="M6 11c0-2.5 1.5-4 4-4s4.5 1.5 4.5 4v1h-8.5z" fill="#a0a0a0"/><circle cx="5" cy="7" r="3" fill="#a0a0a0" stroke="#f0f1f1" stroke-width="0.7"/><path d="M0.5 14.5v-1c0-2.5 2-3.8 4.5-3.8s4.5 1.3 4.5 3.8v1z" fill="#a0a0a0" stroke="#f0f1f1" stroke-width="0.7"/></svg>
<svg class="a" style="left:1365px;top:358px" width="16" height="16" viewBox="0 0 16 16"><path d="M1.5 6.5l5-5h2l5.5 5.5-6 6.5z" fill="none" stroke="#8fa9cc" stroke-width="1" stroke-linejoin="round"/><path d="M9.2 1.2l5.8 5.8" stroke="#8fa9cc" stroke-width="0.9"/><path d="M2 6.3l4.5-4.5v4.5z" fill="#a9bfdc"/></svg>
<svg class="a" style="left:1366px;top:385px" width="13" height="13" viewBox="0 0 13 13"><path d="M0.5 7V0.5h12v12H6.5" fill="none" stroke="#4f86c8" stroke-width="1.1"/><rect x="0.8" y="8.2" width="4" height="4" fill="#fff" stroke="#606060" stroke-width="1.3"/><path d="M4 9l5-5" stroke="#606060" stroke-width="1.6"/><path d="M5.5 3h4.5v4.5z" fill="#606060"/></svg>
<div class="a t " style="left:1123px;top:407px;color:#333">Zugriffsbeschränkung:</div>
<div class="a t " style="left:1257px;top:407px;color:#333">Vorgangsbeteiligter:</div>
<div class="a t " style="left:1391px;top:407px;color:#333">Externe ID:</div>
<div class="a" style="left:1123px;top:424px;width:128px;height:48px;background:#f0f1f1;border:1px solid #c8c8c8"></div>
<div class="a" style="left:1257px;top:424px;width:128px;height:48px;background:#f0f1f1;border:1px solid #c8c8c8"></div>
<div class="a" style="left:1391px;top:424px;width:128px;height:21px;background:#f0f1f1;border:1px solid #c8c8c8"></div>
<svg class="a" style="left:1232px;top:427px" width="15" height="15" viewBox="0 0 15 15"><circle cx="10" cy="3.5" r="3" fill="#a0a0a0"/><path d="M6 11c0-2.5 1.5-4 4-4s4.5 1.5 4.5 4v1h-8.5z" fill="#a0a0a0"/><circle cx="5" cy="7" r="3" fill="#a0a0a0" stroke="#f0f1f1" stroke-width="0.7"/><path d="M0.5 14.5v-1c0-2.5 2-3.8 4.5-3.8s4.5 1.3 4.5 3.8v1z" fill="#a0a0a0" stroke="#f0f1f1" stroke-width="0.7"/></svg>
<svg class="a" style="left:1366px;top:427px" width="15" height="15" viewBox="0 0 15 15"><circle cx="10" cy="3.5" r="3" fill="#a0a0a0"/><path d="M6 11c0-2.5 1.5-4 4-4s4.5 1.5 4.5 4v1h-8.5z" fill="#a0a0a0"/><circle cx="5" cy="7" r="3" fill="#a0a0a0" stroke="#f0f1f1" stroke-width="0.7"/><path d="M0.5 14.5v-1c0-2.5 2-3.8 4.5-3.8s4.5 1.3 4.5 3.8v1z" fill="#a0a0a0" stroke="#f0f1f1" stroke-width="0.7"/></svg>
<svg class="a" style="left:1366px;top:454px" width="13" height="13" viewBox="0 0 13 13"><path d="M0.5 7V0.5h12v12H6.5" fill="none" stroke="#4f86c8" stroke-width="1.1"/><rect x="0.8" y="8.2" width="4" height="4" fill="#fff" stroke="#606060" stroke-width="1.3"/><path d="M4 9l5-5" stroke="#606060" stroke-width="1.6"/><path d="M5.5 3h4.5v4.5z" fill="#606060"/></svg>
<div class="a t " style="left:1263px;top:427px;letter-spacing:-0.35px">Regina Schnei</div>
<div class="tri" style="left:1339px;top:430px;border-left-width:5px;border-right-width:5px;border-top:6px solid #333"></div>
<div class="a t " style="left:1123px;top:476px;color:#333">Frist:</div>
<div class="a t " style="left:1257px;top:476px;color:#333">BBNr.:</div>
<div class="a t " style="left:1391px;top:476px;color:#333">Statusphase:</div>
<div class="a" style="left:1123px;top:493px;width:128px;height:21px;background:#f0f1f1;border:1px solid #c8c8c8"></div>
<div class="a" style="left:1257px;top:493px;width:128px;height:21px;background:#f0f1f1;border:1px solid #c8c8c8"></div>
<div class="a" style="left:1391px;top:493px;width:128px;height:21px;background:#f0f1f1;border:1px solid #c8c8c8"></div>
<svg class="a" style="left:1233px;top:496px" width="14" height="14" viewBox="0 0 14 14"><rect x="0.5" y="2.5" width="13" height="11" fill="#fff" stroke="#a8a8a8" stroke-width="1"/><rect x="0.5" y="2" width="13" height="3" fill="#8fb0d8"/><path d="M3 0.5v3M5.5 0.5v3M8.5 0.5v3M11 0.5v3" stroke="#8fb0d8" stroke-width="0.9"/><text x="4.5" y="12.5" font-size="7" fill="#888" font-family="Liberation Sans">7</text></svg><div class="a" style="left:0;top:793px;width:1531px;height:18px;background:#2170cc"></div>
<div class="a t w" style="left:6px;top:797px">21 Ergebnisse – aktualisiert heute 12:31 (vor 2 Minuten)</div>
<div class="a t w" style="left:1372px;top:797px;letter-spacing:0.3px">Vorgang: ---- - ----</div>
<svg class="a" style="left:1477px;top:795px" width="15" height="16" viewBox="0 0 15 16"><circle cx="7.5" cy="9" r="5.8" fill="none" stroke="#fff" stroke-width="1.6"/><path d="M7.5 9v-3.5M5.5 1h4M7.5 1v2M12 3.5l1.3 1.3" stroke="#fff" stroke-width="1.6"/></svg>
<svg class="a" style="left:1494px;top:796px" width="15" height="15" viewBox="0 0 15 15"><path d="M1.2 2.2c0-0.6 0.4-1 1-1h3.6l7.8 7.8-4.6 4.6-7.8-7.8z" fill="none" stroke="#fff" stroke-width="1.3" stroke-linejoin="round"/></svg></body></html>
